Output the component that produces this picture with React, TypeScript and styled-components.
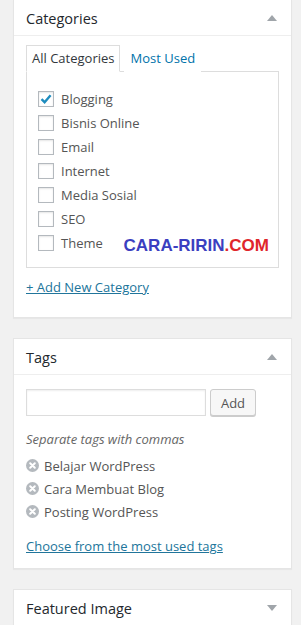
import styled, { createGlobalStyle } from 'styled-components';

const GlobalStyle = createGlobalStyle`
  body {
    margin: 0;
    background: #f1f1f1;
    font-family: 'Open Sans', 'Noto Sans', sans-serif;
    font-size: 13px;
    color: #444;
  }
`;

const categories = ['Blogging', 'Bisnis Online', 'Email', 'Internet', 'Media Sosial', 'SEO', 'Theme'];
const tags = ['Belajar WordPress', 'Cara Membuat Blog', 'Posting WordPress'];

const Arrow = ({ down }: { down?: boolean }) => (
  <ArrowIcon width="10" height="6" viewBox="0 0 10 6">
    <path d={down ? 'M0 0 L10 0 L5 6 Z' : 'M0 6 L10 6 L5 0 Z'} fill="#a0a5aa" />
  </ArrowIcon>
);

const RemoveIcon = () => (
  <svg width="13" height="13" viewBox="0 0 13 13">
    <circle cx="6.5" cy="6.5" r="6.5" fill="#b4b9be" />
    <path d="M4.2 4.2 L8.8 8.8 M8.8 4.2 L4.2 8.8" stroke="#fff" strokeWidth="2" strokeLinecap="round" />
  </svg>
);

const Check = () => (
  <svg width="14" height="14" viewBox="0 0 14 14">
    <path d="M2.5 7.2 L5.6 10.2 L11.6 3.2" stroke="#1e8cbe" strokeWidth="2.4" fill="none" />
  </svg>
);

const App = () => {
  return (
    <Page>
      <GlobalStyle />
      <Box first>
        <Header>
          <Title>Categories</Title>
          <Arrow />
        </Header>
        <Inside>
          <Tabs>
            <Tab active>All Categories</Tab>
            <Tab>Most Used</Tab>
          </Tabs>
          <Panel>
            {categories.map((c, i) => (
              <Row key={c}>
                <CheckBox>{i === 0 && <Check />}</CheckBox>
                {c}
              </Row>
            ))}
            <Watermark>
              CARA-RIRIN<Red>.COM</Red>
            </Watermark>
          </Panel>
          <AddLink>+ Add New Category</AddLink>
        </Inside>
      </Box>

      <Box>
        <Header>
          <Title>Tags</Title>
          <Arrow />
        </Header>
        <TagsInside>
          <InputRow>
            <TagInput />
            <Button>Add</Button>
          </InputRow>
          <Hint>Separate tags with commas</Hint>
          <TagList>
            {tags.map((t) => (
              <TagItem key={t}>
                <RemoveIcon />
                {t}
              </TagItem>
            ))}
          </TagList>
          <MostUsed>Choose from the most used tags</MostUsed>
        </TagsInside>
      </Box>

      <Box>
        <Header>
          <Title>Featured Image</Title>
          <Arrow down />
        </Header>
      </Box>
    </Page>
  );
};

export default App;

const Page = styled.div`
  display: flex;
  flex-direction: column;
  gap: 20px;
  padding-left: 13px;
  width: 279px;
`;

const Box = styled.div<{ first?: boolean }>`
  background: #fff;
  border: 1px solid #e5e5e5;
  border-top-width: ${(p) => (p.first ? '0' : '1px')};
  box-shadow: 0 1px 1px rgba(0, 0, 0, 0.04);
`;

const Header = styled.div`
  display: flex;
  align-items: center;
  justify-content: space-between;
  height: 35px;
  padding: 0 14px 0 12px;
  border-bottom: 1px solid #eee;
`;

const Title = styled.span`
  font-size: 14.5px;
  font-weight: 400;
  color: #23282d;
  margin-top: 1px;
`;

const ArrowIcon = styled.svg`
  display: block;
`;

const Inside = styled.div`
  padding: 8px 12px 20px;
`;

const Tabs = styled.div`
  display: flex;
  align-items: flex-end;
  height: 27px;
`;

const Tab = styled.div<{ active?: boolean }>`
  height: 27px;
  box-sizing: border-box;
  padding: 3px 5px 5px;
  line-height: 18px;
  margin-right: 4px;
  border: 1px solid ${(p) => (p.active ? '#ddd' : 'transparent')};
  border-bottom-color: ${(p) => (p.active ? '#fff' : 'transparent')};
  color: ${(p) => (p.active ? '#32373c' : '#0073aa')};
  background: #fff;
  position: relative;
  z-index: 1;
  margin-bottom: -1px;
`;

const Panel = styled.div`
  position: relative;
  border: 1px solid #ddd;
  padding: 15px 11px 12px;
`;

const Row = styled.div`
  display: flex;
  align-items: center;
  height: 24px;
  gap: 7px;
  color: #555;
`;

const CheckBox = styled.span`
  display: flex;
  align-items: center;
  justify-content: center;
  width: 16px;
  height: 16px;
  box-sizing: border-box;
  border: 1px solid #b4b9be;
  box-shadow: inset 0 1px 2px rgba(0, 0, 0, 0.1);
  background: #fff;
`;

const Watermark = styled.div`
  position: absolute;
  right: 9px;
  bottom: 12px;
  line-height: 18px;
  font-family: 'Liberation Sans', Arial, sans-serif;
  font-weight: bold;
  font-size: 17px;
  color: #3b3fc0;
`;

const Red = styled.span`
  color: #e0262b;
`;

const AddLink = styled.div`
  margin-top: 9px;
  line-height: 20px;
  color: #21759b;
  text-decoration: underline;
`;

const TagsInside = styled.div`
  padding: 14px 12px 12px;
`;

const InputRow = styled.div`
  display: flex;
  gap: 4px;
`;

const TagInput = styled.div`
  width: 180px;
  height: 27px;
  box-sizing: border-box;
  border: 1px solid #ddd;
  box-shadow: inset 0 1px 2px rgba(0, 0, 0, 0.07);
`;

const Button = styled.div`
  width: 46px;
  height: 27px;
  box-sizing: border-box;
  display: flex;
  align-items: center;
  justify-content: center;
  border: 1px solid #ccc;
  border-radius: 3px;
  background: #f7f7f7;
  box-shadow: 0 1px 0 #ccc;
  color: #555;
`;

const Hint = styled.div`
  margin-top: 13px;
  line-height: 20px;
  font-style: italic;
  color: #666;
`;

const TagList = styled.div`
  margin-top: 5px;
  display: flex;
  flex-direction: column;
`;

const TagItem = styled.div`
  display: flex;
  align-items: center;
  gap: 5px;
  height: 23px;
  color: #555;
`;

const MostUsed = styled.div`
  margin-top: 13px;
  line-height: 20px;
  color: #21759b;
  text-decoration: underline;
`;
